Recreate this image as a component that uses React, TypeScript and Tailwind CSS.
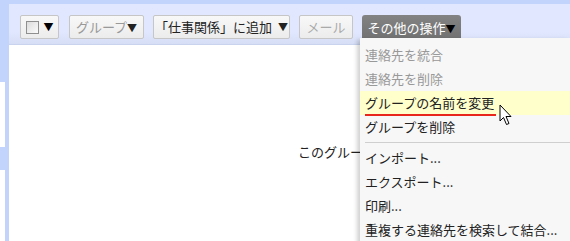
const font = { fontFamily: '"Noto Sans CJK JP", "Noto Sans", sans-serif' };

type MenuItem = { label: string; disabled?: boolean; active?: boolean; sep?: boolean };

const menuItems: MenuItem[] = [
  { label: '連絡先を統合', disabled: true },
  { label: '連絡先を削除', disabled: true },
  { label: 'グループの名前を変更', active: true },
  { label: 'グループを削除' },
  { label: '', sep: true },
  { label: 'インポート...' },
  { label: 'エクスポート...' },
  { label: '印刷...' },
  { label: '重複する連絡先を検索して結合...' },
];

function Caret() {
  return <span className="text-[10px] leading-none">▼</span>;
}

function ToolButton({ children, className = '' }: { children: React.ReactNode; className?: string }) {
  return (
    <div
      className={`flex h-[24px] items-center justify-center rounded-[2px] border border-[#c6c6c6] bg-gradient-to-b from-[#f8f8f8] to-[#ececec] text-[13px] ${className}`}
    >
      {children}
    </div>
  );
}

function Cursor() {
  return (
    <svg width="14" height="22" viewBox="0 0 14 22" className="absolute left-[499px] top-[104px]">
      <path
        d="M1 1 L1 17 L4.5 13.5 L7.5 20.5 L10 19.5 L7 12.5 L12 12.5 Z"
        fill="#fff"
        stroke="#000"
        strokeWidth="1"
        strokeLinejoin="miter"
      />
    </svg>
  );
}

export default function App() {
  return (
    <div className="relative flex h-[241px] w-[570px] flex-col overflow-hidden bg-white" style={font}>
      <div className="h-[4px] bg-[#c3d4fc]" />
      <div className="flex flex-1">
        {/* left rail */}
        <div className="flex w-[9px] flex-col">
          <div className="h-[78px] bg-[#c3d4fc]" />
          <div className="flex h-[65px]">
            <div className="w-[5px] bg-white" />
            <div className="flex-1 bg-[#c3d4fc]" />
          </div>
          <div className="h-[23px] bg-[#c3d4fc]" />
          <div className="flex flex-1">
            <div className="w-[5px] bg-white" />
            <div className="flex-1 bg-[#c3d4fc]" />
          </div>
        </div>

        <div className="flex flex-1 flex-col">
          {/* toolbar */}
          <div className="flex h-[41px] items-start gap-[9px] border-b border-[#c9d3ee] bg-gradient-to-b from-[#e0e7fe] from-70% to-[#d6def5] pl-[11px] pt-[11px]">
            <ToolButton className="w-[39px] gap-[5px]">
              <span className="h-[13px] w-[13px] border border-[#8f8f8f] bg-gradient-to-br from-[#dcdcdc] to-[#fbfbfb]" />
              <Caret />
            </ToolButton>
            <ToolButton className="ml-[1px] w-[75px] text-[#999]">
              グループ
              <span className="text-[#222]">
                <Caret />
              </span>
            </ToolButton>
            <ToolButton className="w-[137px] gap-[6px] text-[#222]">
              <span>「仕事関係」に追加</span>
              <Caret />
            </ToolButton>
            <ToolButton className="w-[54px] text-[#aaa]">メール</ToolButton>
            <div className="h-[27px] w-[99px] rounded-t-[3px] bg-gradient-to-b from-[#838383] to-[#6f6f6f] pt-[2px]">
              <div className="flex h-[22px] items-center justify-center text-[13px] text-white">
                その他の操作
                <span className="text-black">
                  <Caret />
                </span>
              </div>
            </div>
          </div>

          {/* content */}
          <div className="flex-1 pl-[289px] pt-[97px] text-[13px] text-[#222]">
            <div className="w-[62px] overflow-hidden whitespace-nowrap">このグループには連絡先がありません。</div>
          </div>
        </div>
      </div>

      {/* dropdown menu */}
      <div className="absolute left-[360px] right-0 top-[38px] h-[220px] bg-[#f7f7f7] pt-[5px] shadow-[-3px_2px_4px_rgba(0,0,0,0.18)]">
        {menuItems.map((item, i) =>
          item.sep ? (
            <div key={i} className="my-[3px] ml-[5px] h-px bg-[#cfcfcf]" />
          ) : (
            <div
              key={i}
              className={`flex h-[24px] items-center pl-[5px] text-[13px] ${
                item.disabled ? 'text-[#999]' : 'text-[#222]'
              } ${item.active ? 'bg-[#ffffcc]' : ''}`}
            >
              <span className="relative">
                {item.label}
                {item.active && (
                  <span className="absolute -bottom-[3px] left-0 right-[-2px] h-[2px] bg-[#e8261c]" />
                )}
              </span>
            </div>
          )
        )}
      </div>

      <Cursor />
    </div>
  );
}
